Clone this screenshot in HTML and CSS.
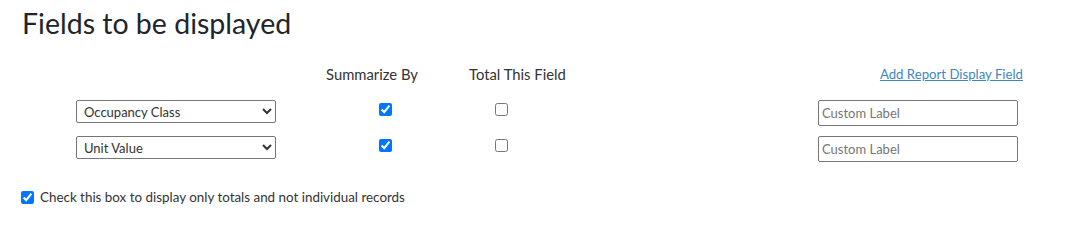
FILE: index.html
```html
<!DOCTYPE html>
<html lang="en">
<head>
<meta charset="utf-8">
<title>Fields to be displayed</title>
<link rel="stylesheet" href="styles.css">
</head>
<body>
<div class="page">
  <h2 class="title">Fields to be displayed</h2>
  <div class="fields">
    <div class="cell"></div>
    <div class="cell head">Summarize By</div>
    <div class="cell head">Total This Field</div>
    <div class="cell"></div>
    <div class="cell head right"><a href="#" class="add-link">Add Report Display Field</a></div>

    <div class="cell sel-cell">
      <select class="field-select"><option>Occupancy Class</option></select>
    </div>
    <div class="cell chk-sum"><input type="checkbox" checked></div>
    <div class="cell chk-tot"><input type="checkbox"></div>
    <div class="cell"></div>
    <div class="cell"><input type="text" class="custom" placeholder="Custom Label"></div>

    <div class="cell sel-cell">
      <select class="field-select"><option>Unit Value</option></select>
    </div>
    <div class="cell chk-sum"><input type="checkbox" checked></div>
    <div class="cell chk-tot"><input type="checkbox"></div>
    <div class="cell"></div>
    <div class="cell"><input type="text" class="custom" placeholder="Custom Label"></div>
  </div>
  <label class="totals-only"><input type="checkbox" checked> Check this box to display only totals and not individual records</label>
</div>
</body>
</html>
```

FILE: styles.css
```css
html, body {
  margin: 0;
  padding: 0;
  background: #fff;
}
body {
  font-family: Lato, "Open Sans", sans-serif;
  color: #333;
}
.page {
  padding: 5px 0 0 22px;
  width: 1001px;
}
.title {
  margin: 0;
  font-size: 28.5px;
  line-height: 36px;
  font-weight: 400;
  color: #212529;
}
.fields {
  display: grid;
  grid-template-columns: 304px 143px 1fr 20px 205px;
  grid-template-rows: 24px 36px 36px;
  margin-top: 21px;
  font-size: 14.8px;
}
.cell {
  display: flex;
  align-items: flex-start;
}
.head {
  align-items: center;
  color: #333;
}
.right {
  justify-content: flex-end;
}
.add-link {
  color: #3d87c4;
  font-size: 13.2px;
  text-decoration: underline;
}
.sel-cell {
  padding-top: 14px;
  padding-left: 54px;
}
.field-select {
  width: 200px;
  height: 23px;
  font-family: inherit;
  font-size: 13px;
  color: #333;
  border: 1px solid #767676;
  border-radius: 2px;
  background: #fff;
  padding: 0 3px;
  margin: 0;
}
.chk-sum, .chk-tot {
  padding-top: 14px;
}
.chk-sum input, .chk-tot input {
  margin: 3px 0 0 0;
}
.chk-sum input { margin-left: 53px; }
.chk-tot input { margin-left: 26px; }
.custom {
  margin-top: 14px;
  width: 200px;
  height: 26px;
  box-sizing: border-box;
  border: 1px solid #767676;
  border-radius: 2px;
  padding: 0 3px;
  font-family: inherit;
  font-size: 13px;
}
.custom::placeholder {
  color: #757575;
}
.totals-only {
  display: flex;
  align-items: center;
  gap: 6px;
  margin-top: 31px;
  margin-left: -1px;
  font-size: 13.4px;
  color: #333;
}
.totals-only input {
  margin: 0;
}
```
